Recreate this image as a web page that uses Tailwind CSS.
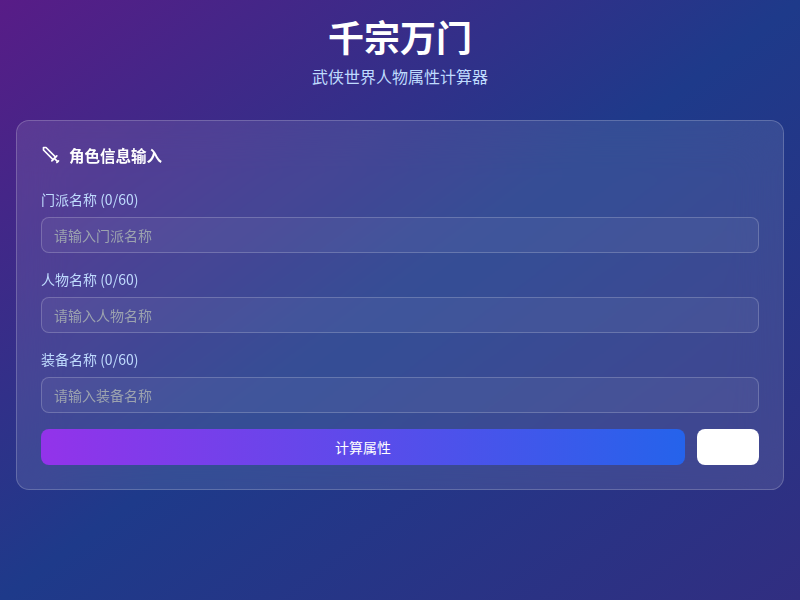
<!DOCTYPE html>
<html lang="zh-CN">
<head>
    <meta charset="UTF-8">
    <meta name="viewport" content="width=device-width, initial-scale=1.0">
    <title>千宗万门</title>
    <script src="https://cdn.jsdelivr.net/npm/@tailwindcss/browser@4"></script>
</head>
<body class="min-h-screen bg-[linear-gradient(to_bottom_right,#581c87,#1e3a8a,#312e81)] font-['Noto_Sans_CJK_SC',sans-serif]">
    <div class="p-4">
        <div class="text-center mb-8">
            <h1 class="text-4xl font-bold text-white mb-2">千宗万门</h1>
            <p class="text-base text-[#bfdbfe]">武侠世界人物属性计算器</p>
        </div>
        <div class="bg-white/10 backdrop-blur-xl border border-white/20 rounded-[13px] p-6">
            <div class="flex items-start gap-2 mb-5">
                <svg class="w-5 h-5 text-white" viewBox="0 0 24 24" fill="none" stroke="currentColor" stroke-width="2" stroke-linecap="round" stroke-linejoin="round">
                    <polyline points="14.5 17.5 3 6 3 3 6 3 17.5 14.5"></polyline>
                    <line x1="13" y1="19" x2="19" y2="13"></line>
                    <line x1="16" y1="16" x2="20" y2="20"></line>
                    <line x1="19" y1="21" x2="21" y2="19"></line>
                </svg>
                <h2 class="text-[15.5px] leading-[20px] font-semibold text-white h-6">角色信息输入</h2>
            </div>
            <div class="flex flex-col gap-4">
                <div>
                    <label class="block text-sm text-[#bfdbfe] mb-2">门派名称 (0/60)</label>
                    <input class="w-full h-9 px-3 text-sm bg-white/5 border border-white/20 rounded-lg text-white placeholder:text-[#9ca3af]" type="text" placeholder="请输入门派名称">
                </div>
                <div>
                    <label class="block text-sm text-[#bfdbfe] mb-2">人物名称 (0/60)</label>
                    <input class="w-full h-9 px-3 text-sm bg-white/5 border border-white/20 rounded-lg text-white placeholder:text-[#9ca3af]" type="text" placeholder="请输入人物名称">
                </div>
                <div>
                    <label class="block text-sm text-[#bfdbfe] mb-2">装备名称 (0/60)</label>
                    <input class="w-full h-9 px-3 text-sm bg-white/5 border border-white/20 rounded-lg text-white placeholder:text-[#9ca3af]" type="text" placeholder="请输入装备名称">
                </div>
                <div class="flex gap-3">
                    <button class="flex-1 h-9 rounded-lg text-sm text-white bg-[linear-gradient(to_right,#9333ea,#2563eb)]" type="button">计算属性</button>
                    <button class="w-[62px] h-9 rounded-lg bg-white" type="button"></button>
                </div>
            </div>
        </div>
    </div>
</body>
</html>
